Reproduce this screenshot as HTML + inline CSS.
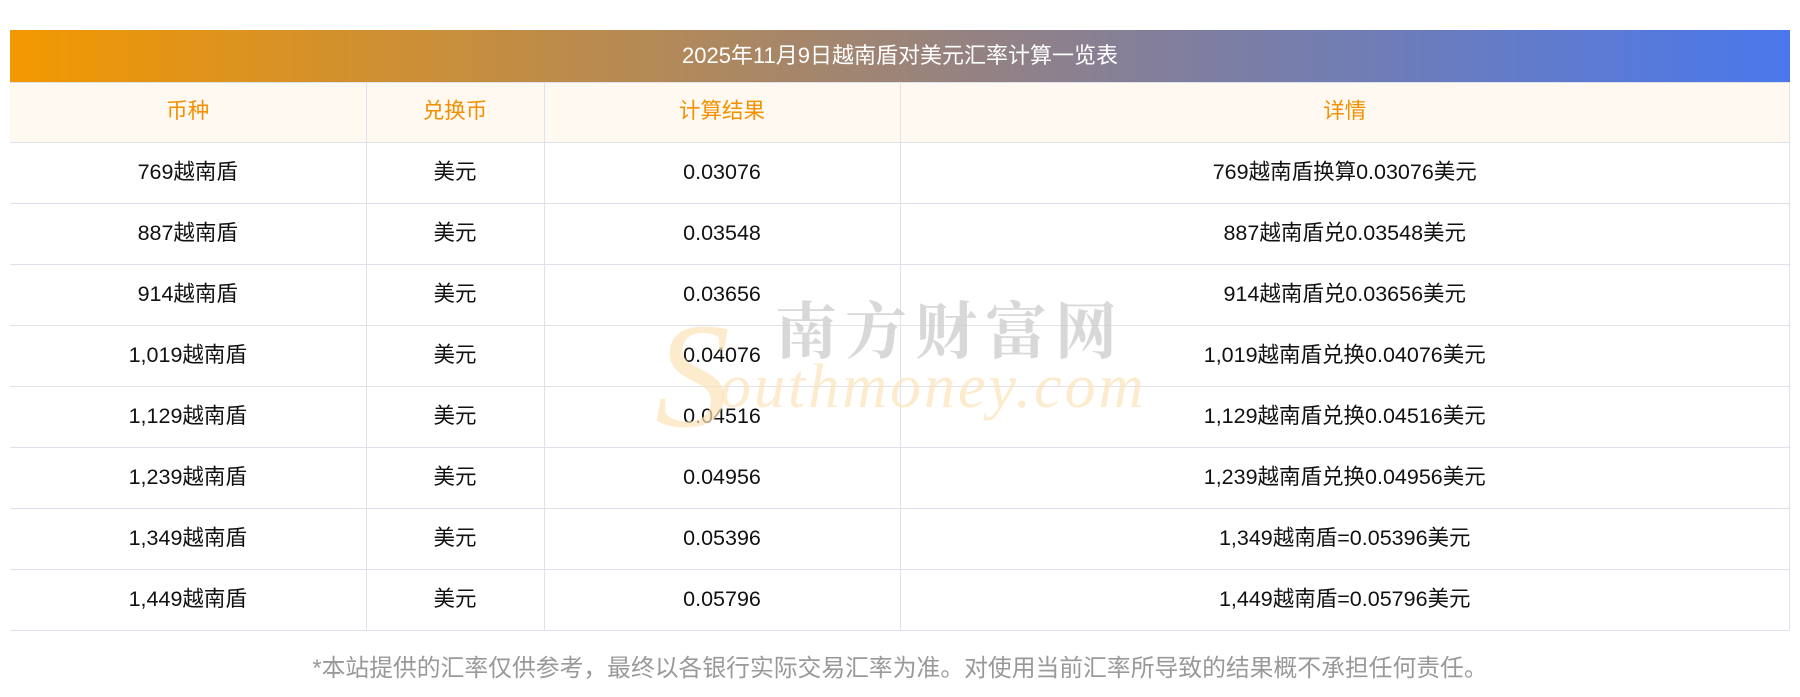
<!DOCTYPE html>
<html><head><meta charset="utf-8"><style>
*{margin:0;padding:0;box-sizing:border-box}
body{width:1800px;height:697px;background:#fff;font-family:"Liberation Sans","Noto Sans CJK SC",sans-serif;position:relative;overflow:hidden}
.title{position:absolute;left:10px;top:30px;width:1780px;height:52px;background:linear-gradient(90deg,#f39800,#8a8090 60%,#4a78ec);color:#fff;font-size:22px;text-align:center;line-height:52px}
table{position:absolute;left:10px;top:82px;width:1780px;border-collapse:collapse;font-size:21.5px;line-height:24px}
td,th{border:1px solid #dde1ea;text-align:center;vertical-align:middle;height:61px;font-weight:normal;color:#111;padding-bottom:3px}
th{background:#fff9f2;color:#f39000;height:60px}
tr>*:first-child{border-left:none}
.foot{position:absolute;top:648px;left:0;width:1800px;text-align:center;color:#999;font-size:23.8px}
.wm1{position:absolute;left:775px;top:282px;font-size:62px;color:#ccc;opacity:.75;font-family:"Noto Serif CJK SC",serif;font-weight:bold;letter-spacing:8px}
.wm2{position:absolute;left:720px;top:352px;font-size:62px;color:#fde3b8;opacity:.7;font-family:"Liberation Serif",serif;font-style:italic;letter-spacing:3px}
.wmS{position:absolute;left:655px;top:290px;font-size:150px;color:#fde3b8;opacity:.7;font-family:"Liberation Serif",serif;font-style:italic}
</style></head><body>
<div class="title">2025年11月9日越南盾对美元汇率计算一览表</div>
<table>
<colgroup><col style="width:356px"><col style="width:178px"><col style="width:356px"><col></colgroup>
<tr><th>币种</th><th>兑换币</th><th>计算结果</th><th>详情</th></tr>
<tr><td>769越南盾</td><td>美元</td><td>0.03076</td><td>769越南盾换算0.03076美元</td></tr>
<tr><td>887越南盾</td><td>美元</td><td>0.03548</td><td>887越南盾兑0.03548美元</td></tr>
<tr><td>914越南盾</td><td>美元</td><td>0.03656</td><td>914越南盾兑0.03656美元</td></tr>
<tr><td>1,019越南盾</td><td>美元</td><td>0.04076</td><td>1,019越南盾兑换0.04076美元</td></tr>
<tr><td>1,129越南盾</td><td>美元</td><td>0.04516</td><td>1,129越南盾兑换0.04516美元</td></tr>
<tr><td>1,239越南盾</td><td>美元</td><td>0.04956</td><td>1,239越南盾兑换0.04956美元</td></tr>
<tr><td>1,349越南盾</td><td>美元</td><td>0.05396</td><td>1,349越南盾=0.05396美元</td></tr>
<tr><td>1,449越南盾</td><td>美元</td><td>0.05796</td><td>1,449越南盾=0.05796美元</td></tr>
</table>
<div class="wmS">S</div>
<div class="wm1">南方财富网</div>
<div class="wm2">outhmoney.com</div>
<div class="foot">*本站提供的汇率仅供参考，最终以各银行实际交易汇率为准。对使用当前汇率所导致的结果概不承担任何责任。</div>
</body></html>
